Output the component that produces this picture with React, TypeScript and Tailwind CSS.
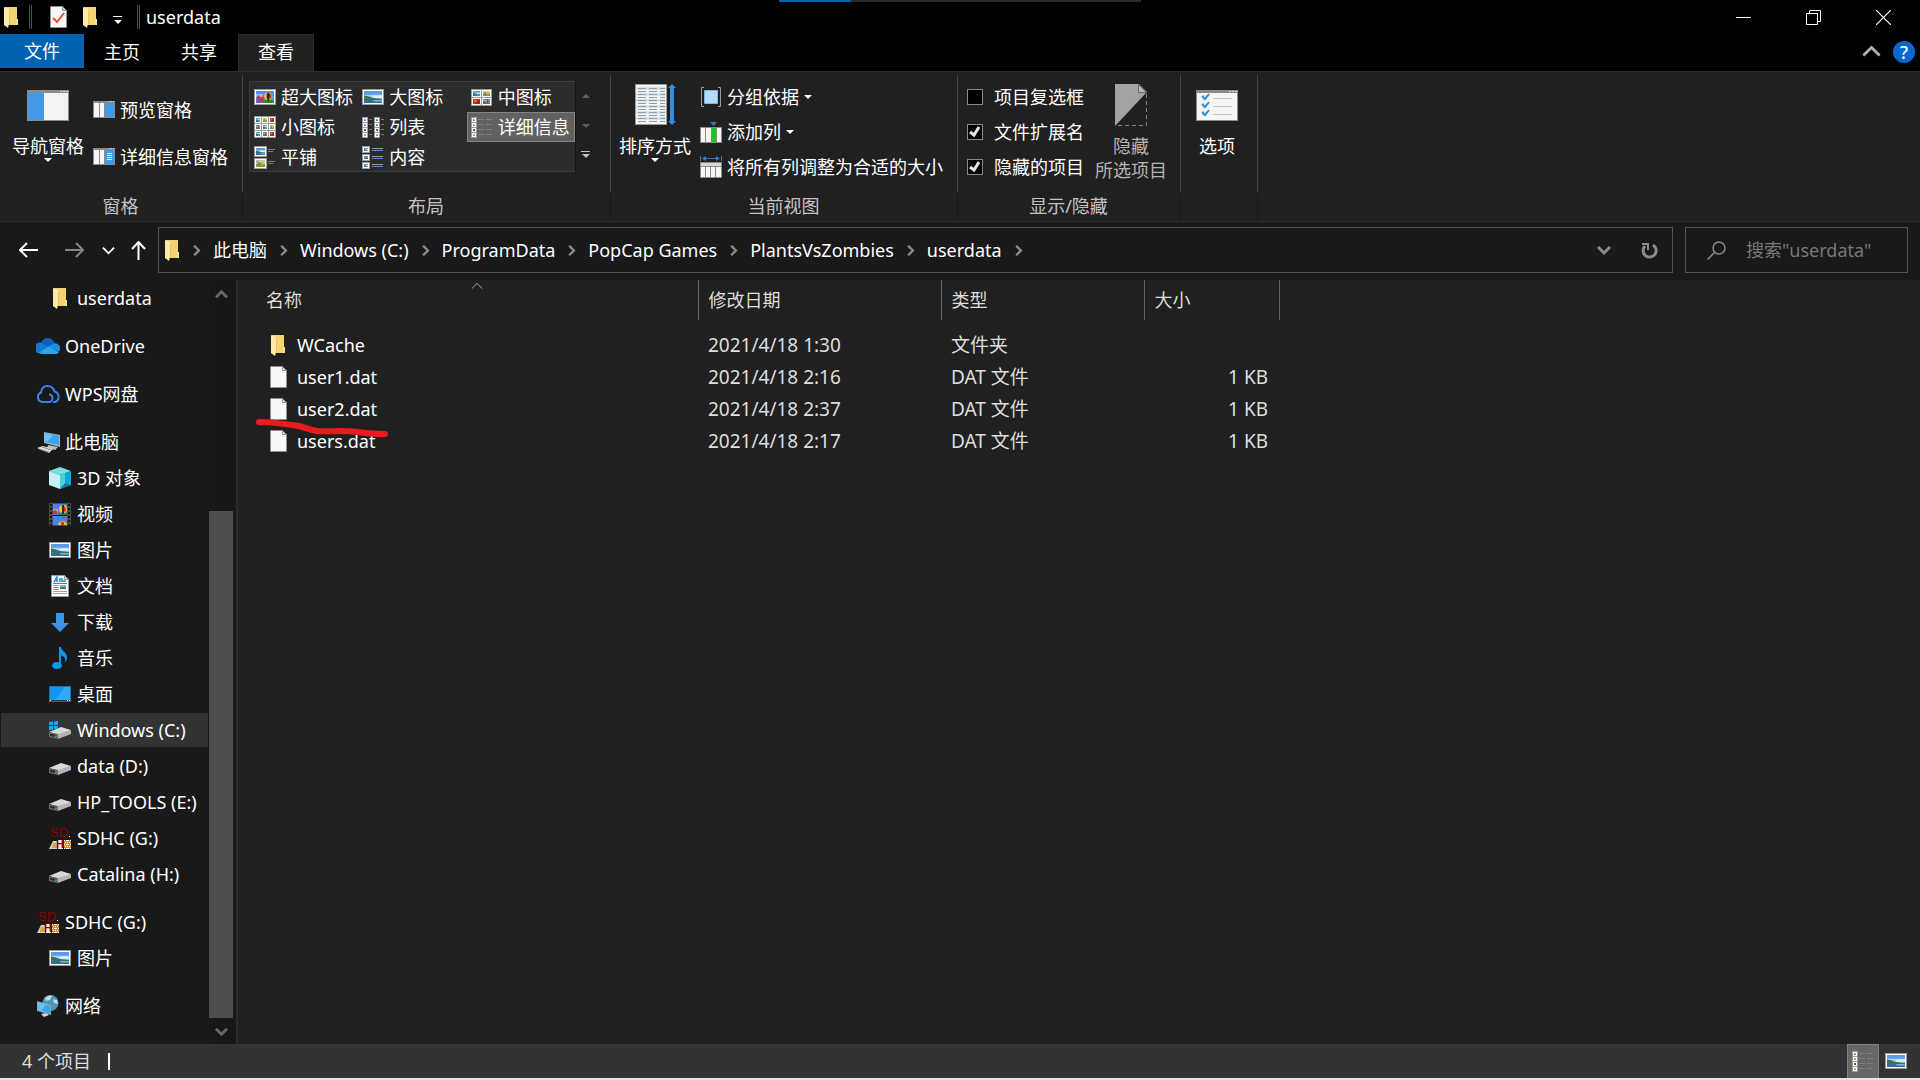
import { useState } from 'react';
import type { ReactNode } from 'react';

interface NavItem {
    icon: ReactNode;
    name: string;
    level: 1 | 2;
    selected?: boolean;
}

interface FileRow {
    name: string;
    date: string;
    type: string;
    size: string;
    folder?: boolean;
    marked?: boolean;
}

interface ThumbProps {
    x: number;
    y: number;
    w: number;
    h: number;
    kind: 'sea' | 'balloon' | 'flower' | 'red';
}

/* ---------- icons ---------- */

function Thumb({ x, y, w, h, kind }: ThumbProps) {
    return (
        <svg x={x} y={y} width={w} height={h} viewBox="0 0 22 16" preserveAspectRatio="none">
            {kind === 'sea' && (
                <>
                    <path fill="#5b9bea" d="M0 0h22v16H0z" />
                    <path fill="#a9d2f7" d="M0 5h22v5H0z" />
                    <path fill="#e2f1fb" d="M12 6h10v3H10z" />
                    <path fill="#3f6f55" d="M0 6l5 1 5 2 5 1 7 1v1H0z" />
                    <path fill="#2f6f9f" d="M0 12h22v4H0z" />
                    <path fill="#7fb3d4" d="M10 12h12v2H13z" />
                </>
            )}
            {kind === 'balloon' && (
                <>
                    <path fill="#4f8ff0" d="M0 0h22v16H0z" />
                    <path fill="#9cc6f6" d="M0 4h8v4H0z" />
                    <path fill="#2f8a3a" d="M8 12h14v4H8z" />
                    <path fill="#d8342c" d="M1 8l2-3 3 4 2-2 2 3-2 5H1z" />
                    <path fill="#7a4bc4" d="M1 12l3-2 3 4-2 2H1z" />
                    <ellipse cx="15" cy="7" rx="5" ry="5" fill="#f5c518" />
                    <ellipse cx="15" cy="7" rx="2" ry="5" fill="#3a2d12" />
                    <path fill="#d8342c" d="M17 3l2 2v4l-2 2z" />
                    <path fill="#3a2d12" d="M14 12h2v2h-2z" />
                </>
            )}
            {kind === 'flower' && (
                <>
                    <path fill="#b9d5a2" d="M0 0h22v16H0z" />
                    <path fill="#6ea33f" d="M0 9h22v7H0z" />
                    <circle cx="8" cy="9" r="4" fill="#e0572f" />
                    <circle cx="15" cy="7" r="4" fill="#e9b23a" />
                    <path fill="#7a8fd6" d="M1 2h5v4H1z" />
                </>
            )}
            {kind === 'red' && (
                <>
                    <path fill="#c4301f" d="M0 0h22v16H0z" />
                    <path fill="#e8842a" d="M4 3h8v6H4z" />
                    <path fill="#7d1c12" d="M13 8h7v6h-7z" />
                </>
            )}
        </svg>
    );
}

function Tile({ x, y, w, h, kind }: ThumbProps) {
    return (
        <>
            <rect x={x} y={y} width={w} height={h} fill="#9d9d9d" />
            <rect x={x + 1} y={y + 1} width={w - 2} height={h - 2} fill="#fff" />
            <Thumb x={x + 2} y={y + 2} w={w - 4} h={h - 4} kind={kind} />
        </>
    );
}

function FolderIcon() {
    return (
        <svg width="15" height="21" viewBox="0 0 15 21" className="shrink-0">
            <path fill="#f5d473" d="M1 0h12v12h1v6H3z" />
            <path fill="#fbe08c" d="M12 12h2v6h-2z" />
            <path fill="#ffeaa9" d="M0 0l5 2v15l-1 4-4-3z" />
            <path fill="#e9c45f" d="M5 4h1v14H5z" />
        </svg>
    );
}

function FileIcon({ check }: { check?: boolean }) {
    return (
        <svg width="17" height="22" viewBox="0 0 17 22" className="shrink-0">
            <path fill="#f6f8f9" stroke="#8f8f8f" d="M.5.5h12l4 4v17H.5z" />
            <path fill="#dcdcdc" stroke="#8f8f8f" d="M12.5.5v4h4z" />
            {check && <path fill="none" stroke="#e8541e" strokeWidth="2" d="M3 12l4 4 7-9" />}
        </svg>
    );
}

function PictureIcon() {
    return (
        <svg width="22" height="16" viewBox="0 0 22 16" className="shrink-0">
            <Tile x={0} y={0} w={22} h={16} kind="sea" />
        </svg>
    );
}

function OneDriveIcon() {
    return (
        <svg width="24" height="16" viewBox="0 0 24 16" className="shrink-0">
            <path fill="#0a64b8" d="M5 5a7 7 0 0 1 13-1l1 3-7 3z" />
            <path fill="#0f78d4" d="M5 4.5l8 5-10 6A5.500 5.500 0 0 1 5 4.5z" />
            <path fill="#1890e0" d="M12 8.500l6-3a5 5 0 0 1 5 8z" />
            <path fill="#29a7ea" d="M3 14.500l10-6 10 5.500c-1 1.500-2 2-4 2H6c-1 0-2-.5-3-1.500z" />
        </svg>
    );
}

function WpsIcon() {
    return (
        <svg width="24" height="18" viewBox="0 0 24 18" fill="none" stroke="#3f7ee8" strokeWidth="2" className="shrink-0">
            <path d="M14 17H6a5 5 0 0 1-1-9.500C5 3.500 8 1 11.500 1S18 3.500 18.500 6.500A5.500 5.500 0 0 1 19 17h-2" />
            <path d="M13 9.500c2 0 3.500 1.500 3.500 3.500S15 17 13 17" />
        </svg>
    );
}

function PcIcon() {
    return (
        <svg width="24" height="21" viewBox="0 0 24 21" className="shrink-0">
            <path fill="#9fb4c4" d="M8 0l16 3v12L8 11z" />
            <path fill="#37a6f2" d="M9 1l14 3v9L9 10z" />
            <path fill="#6cc3f9" d="M9 1l8 2-6 7-2-1z" />
            <path fill="#b9bec2" d="M12 13l10 2-3 3-8-2z" />
            <path fill="#dfe3e6" d="M1 16l6-2 10 3-4 4z" />
            <path stroke="#8a9196" d="M3 17l10 3M6 15l9 3" />
        </svg>
    );
}

function CubeIcon() {
    return (
        <svg width="22" height="22" viewBox="0 0 22 22" className="shrink-0">
            <path fill="#7adfe8" d="M11 0l11 4-11 4L0 4z" />
            <path fill="#c5f1f4" d="M0 4l11 4v14L0 18z" />
            <path fill="#12a7dc" d="M22 4L11 8v14l11-4z" />
            <path fill="#0a7fa8" d="M22 18l-6-2-5 6z" />
            <path fill="#4fd0dd" d="M11 8l5-2v10l-5 6z" />
        </svg>
    );
}

function VideoIcon() {
    return (
        <svg width="22" height="23" viewBox="0 0 22 23" className="shrink-0">
            <path fill="#4a4a4a" d="M0 0h22v23H0z" />
            <path fill="#4a83e6" d="M4 1h14v21H4z" />
            <path fill="#c98fc0" d="M4 6h5v4H4z" />
            <path fill="#d8342c" d="M4 8l3-1 2 4H4z" />
            <path fill="#2f8a3a" d="M9 10h9v2H9z" />
            <path fill="#111" d="M4 12h14v1H4z" />
            <ellipse cx="14" cy="6" rx="4" ry="4" fill="#f5c518" />
            <path fill="#3a2d12" d="M13 2h2v9h-2z" />
            <path fill="#d8342c" d="M15 3l2 2v3l-2 1zM12 14h5l-2 2z" />
            <path fill="#f5c518" d="M9 22c0-5 9-5 9 0z" />
            <path fill="#d8342c" d="M12 19h3v3h-3z" />
            <path stroke="#161616" strokeWidth="2" strokeDasharray="2 2" d="M2 1v22M20 1v22" />
        </svg>
    );
}

function DocIcon() {
    return (
        <svg width="18" height="22" viewBox="0 0 18 22" className="shrink-0">
            <path fill="#fff" stroke="#9a9a9a" d="M.5.5h13l4 4v17H.5z" />
            <path fill="#ddd" stroke="#9a9a9a" d="M13.5.5v4h4z" />
            <path stroke="#2a8fd6" strokeWidth="1.500" fill="none" d="M3 7l3-5v5M4 5h2M8 4h4M8 6h7" />
            <path stroke="#2a8fd6" strokeWidth="1" d="M2 8.500h14" />
            <path stroke="#9f9f9f" d="M2 10.500h6M2 12.500h6M2 14.500h6M2 16.500h14M2 18.500h14" />
            <path fill="#7fb3df" d="M9 10h6v4H9z" />
            <path fill="#3f7f52" d="M9 12h6v2H9z" />
        </svg>
    );
}

function DownloadIcon() {
    return (
        <svg width="18" height="19" viewBox="0 0 18 19" className="shrink-0">
            <path fill="#3b94e4" d="M5 0h8v10h5l-9 9-9-9h5z" />
        </svg>
    );
}

function MusicIcon() {
    return (
        <svg width="18" height="22" viewBox="0 0 18 22" className="shrink-0">
            <ellipse cx="6" cy="18.500" rx="5" ry="3.500" fill="#1096f0" />
            <path fill="#1096f0" d="M8 0h2c0 4 6 5 6 10 0 2-.5 4-2 5.500 1-4-.5-6-4-7V18H8z" />
        </svg>
    );
}

function DesktopIcon() {
    return (
        <svg width="22" height="16" viewBox="0 0 22 16" className="shrink-0">
            <path fill="#0c72b9" d="M0 0h22v16H0z" />
            <path fill="#1295f4" d="M1 1h20v13H1z" />
            <path fill="#33a9fb" d="M16 1h5v13H6z" />
            <path fill="#0b3f68" d="M1 14h20v1H1z" />
            <path fill="#fff" d="M1 14h1v1H1zM18 14h1v1h-1zM20 14h1v1h-1z" />
        </svg>
    );
}

function DriveIcon({ windows }: { windows?: boolean }) {
    return (
        <svg width="22" height="18" viewBox="0 0 22 18" className="shrink-0">
            <path fill="#d9d9d9" d="M0 11l12-5 10 3-11 5z" />
            <path fill="#6f6f6f" d="M0 11l9 2v5l-9-2z" />
            <path fill="#b4b4b4" d="M9 13l13-4v4L9 18z" />
            <path fill="#2e2e2e" d="M1 12.500l7 1.500v2.500L1 15z" />
            <path fill="#37c24a" d="M6 14.500h2v1.500H6z" />
            {windows && <path fill="#00b3f0" d="M0 1l4-.5V4H0zM4.800.4L9 0v4H4.800zM0 5h4v4H0zM4.800 5H9v3H4.800z" />}
        </svg>
    );
}

function SdIcon() {
    return (
        <svg width="22" height="24" viewBox="0 0 22 24" className="shrink-0 overflow-visible" fontFamily="Liberation Sans, sans-serif">
            <text x="1" y="11" fontSize="13" fill="#8b0000">SD</text>
            <path fill="#fff" d="M20 10h1v1h-1z" />
            <path fill="#d8d2bd" d="M0 23l4-8h4v8z" />
            <path fill="#f6f2df" d="M9 14h5v9H9z" />
            <path fill="#c9a44c" d="M4 17h3v5H3z" />
            <text x="7" y="22" fontSize="11" fontWeight="700" fill="#8b0000">H</text>
            <path fill="#f58220" d="M15 14h7v9h-7z" />
            <path stroke="#fff" strokeDasharray="1 1" d="M15 14.500h7M16 16.500h6M15 18.500h7M16 20.500h6M15 22.500h7M18.500 14v9" />
        </svg>
    );
}

function NetworkIcon() {
    return (
        <svg width="22" height="22" viewBox="0 0 22 22" className="shrink-0">
            <circle cx="13.500" cy="8" r="8" fill="#4f93b4" />
            <path fill="#b9dcea" d="M8 3c2-2 5-3 7-2l-2 4-4 1zM16 4l4 1 1 4-4-1z" />
            <path fill="#d5d5d5" d="M4 19l5-1 3 2-5 2z" />
            <path fill="#8fa6b4" d="M0 6l14 4v10L0 16z" />
            <path fill="#35a7f4" d="M1 7.500l12 3.500v7.500L1 15z" />
            <path fill="#66c1fa" d="M1 7.500l8 2L4 16l-3-1z" />
        </svg>
    );
}

function PaneIcon({ kind }: { kind: 'nav' | 'preview' | 'details' }) {
    if (kind === 'nav') {
        return (
            <svg width="42" height="31" viewBox="0 0 42 31">
                <path fill="#8b8b8d" d="M0 0h42v31H0z" />
                <path fill="#f3f3f4" d="M18 3h23v27H18z" />
                <path fill="#3f9be6" d="M1 3h16v27H1z" />
                <path fill="#fff" d="M17 3h1v27h-1z" />
                <path fill="#d4d4d4" d="M33 1h2v1h-2zM36 1h2v1h-2zM39 1h2v1h-2z" />
            </svg>
        );
    }
    return (
        <svg width="22" height="17" viewBox="0 0 22 17" className="shrink-0">
            <path fill="#8b8b8d" d="M0 0h22v17H0z" />
            <path fill="#f6f6f6" d="M1 2h5v14H1zM7 2h4v14H7z" />
            <path fill="#3f9be6" d="M12 2h9v14h-9z" />
            <path fill="#d4d4d4" d="M16 0h1v1h-1zM18 0h1v1h-1zM20 0h1v1h-1z" />
            {kind === 'details' && <path stroke="#d7ecfb" d="M14 5.500h5M14 7.500h5M14 9.500h5M14 11.500h5" />}
        </svg>
    );
}

function XlIcon() {
    return (
        <svg width="22" height="16" viewBox="0 0 22 16">
            <Tile x={0} y={0} w={22} h={16} kind="balloon" />
        </svg>
    );
}

function MediumIcon() {
    return (
        <svg width="21" height="17" viewBox="0 0 21 17">
            <Tile x={0} y={0} w={11} h={9} kind="sea" />
            <Tile x={10} y={0} w={11} h={9} kind="flower" />
            <Tile x={0} y={8} w={11} h={9} kind="red" />
            <Tile x={10} y={8} w={11} h={9} kind="balloon" />
        </svg>
    );
}

function SmallIcon() {
    const kinds = ['sea', 'flower', 'red', 'balloon', 'sea', 'flower', 'sea', 'balloon', 'red'] as const;
    return (
        <svg width="22" height="22" viewBox="0 0 22 22">
            {kinds.map((kind, i) => (
                <Tile key={i} x={(i % 3) * 7} y={Math.floor(i / 3) * 7} w={8} h={8} kind={kind} />
            ))}
        </svg>
    );
}

function ListIcon() {
    return (
        <svg width="22" height="21" viewBox="0 0 22 21">
            {[0, 12].map((x) => [0, 5, 10, 15].map((y, i) => (
                <Tile key={`${x}-${y}`} x={x} y={y} w={6} h={6} kind={(['sea', 'sea', 'red', 'flower'] as const)[i]} />
            )))}
            <path stroke="#7c7c7c" d="M7 2.500h3M7 7.500h3M7 12.500h3M7 17.500h3M19 2.500h3M19 7.500h3M19 12.500h3M19 17.500h3" />
        </svg>
    );
}

function DetailsIcon() {
    return (
        <svg width="22" height="21" viewBox="0 0 22 21">
            {[0, 5, 10, 15].map((y, i) => (
                <Tile key={y} x={0} y={y} w={6} h={6} kind={(['sea', 'flower', 'red', 'flower'] as const)[i]} />
            ))}
            <path stroke="#7f7f7f" d="M7 2.500h6M15 2.500h6M7 7.500h6M15 7.500h6M7 12.500h6M15 12.500h6M7 17.500h6M15 17.500h6" />
        </svg>
    );
}

function TilesIcon() {
    return (
        <svg width="22" height="23" viewBox="0 0 22 23">
            <Tile x={0} y={0} w={13} h={11} kind="sea" />
            <Tile x={0} y={12} w={13} h={11} kind="flower" />
            <path stroke="#7c7c7c" d="M14 3.500h7M14 5.500h5M14 15.500h7M14 17.500h5" />
        </svg>
    );
}

function ContentIcon() {
    return (
        <svg width="22" height="23" viewBox="0 0 22 23">
            <Tile x={0} y={0} w={8} h={7} kind="sea" />
            <Tile x={0} y={8} w={8} h={7} kind="balloon" />
            <Tile x={0} y={16} w={8} h={7} kind="sea" />
            <path stroke="#9a9a9a" d="M10 2.500h11M10 10.500h11M10 18.500h11" />
            <path stroke="#4a8fe8" d="M10 4.500h11M10 12.500h11M10 20.500h11" />
        </svg>
    );
}

function SortIcon() {
    return (
        <svg width="41" height="42" viewBox="0 0 41 42">
            <path fill="#f5f5f5" stroke="#9c9c9c" d="M.5.5h31v40H.5z" />
            <path fill="#cfe8f4" d="M1 3h30v3H1zM1 9h30v3H1zM1 15h30v3H1zM1 21h30v3H1zM1 27h30v3H1zM1 33h30v3H1z" />
            <path stroke="#9a9a9a" strokeDasharray="8 3" d="M3 4.500h27M3 7.500h27M3 10.500h27M3 13.500h27M3 16.500h27M3 19.500h27M3 22.500h27M3 25.500h27M3 28.500h27M3 31.500h27M3 34.500h27M3 37.500h27" />
            <path fill="#2f8fe0" d="M37 0l4 4h-2v33h2l-4 4-4-4h2V4h-2z" />
        </svg>
    );
}

function GroupByIcon() {
    return (
        <svg width="22" height="20" viewBox="0 0 22 20">
            <path fill="none" stroke="#9a9a9a" d="M4 .5H1.500v19H4M18 .5h2.500v19H18" />
            <path fill="#b7dcfb" stroke="#7db7ea" d="M4.500 3.500h13v13h-13z" />
        </svg>
    );
}

function AddColumnIcon() {
    return (
        <svg width="22" height="22" viewBox="0 0 22 22">
            <path fill="#2f7fc8" d="M10 1h7l-3.500 4z" />
            <path fill="#8a8a8a" d="M0 6h22v16H0z" />
            <path fill="#f6f6f6" d="M1 7h4v14H1zM6 7h5v14H6zM17 7h4v14h-4z" />
            <path fill="#22c322" d="M11 7h5v14h-5z" />
        </svg>
    );
}

function FitColumnsIcon() {
    return (
        <svg width="22" height="22" viewBox="0 0 22 22">
            <path stroke="#2f7fc8" d="M.5 0v5M21.500 0v5M3 2.500h16" />
            <path fill="#2f7fc8" d="M2 2.500L6 0v5zM20 2.500L16 0v5z" />
            <path fill="#8a8a8a" d="M0 6h22v16H0z" />
            <path fill="#d8d8d8" d="M1 7h20v3H1z" />
            <path fill="#f6f6f6" d="M1 11h4v10H1zM6 11h4v10H6zM11 11h4v10h-4zM16 11h5v10h-5z" />
        </svg>
    );
}

function HideIcon() {
    return (
        <svg width="32" height="42" viewBox="0 0 32 42">
            <path fill="#a3a3a3" d="M0 0h24l8 8L0 42z" />
            <path fill="#b9b9b9" stroke="#666" d="M23.500.5v8h8z" />
            <path fill="none" stroke="#808080" strokeDasharray="4 3" d="M31.500 10v31.500H1" />
        </svg>
    );
}

function OptionsIcon() {
    return (
        <svg width="42" height="31" viewBox="0 0 42 31">
            <path fill="#8b8b8d" d="M0 0h42v31H0z" />
            <path fill="#f5f5f6" d="M1 3h40v27H1z" />
            <path fill="#d4d4d4" d="M33 1h2v1h-2zM36 1h2v1h-2zM39 1h2v1h-2z" />
            <path fill="#dedede" d="M6 5h5v5H6zM6 13h5v5H6zM6 21h5v5H6z" />
            <path fill="none" stroke="#2f8fe0" strokeWidth="2" d="M6 6l3 3 4-5M6 14l3 3 4-5M6 22l3 3 4-5" />
            <path stroke="#c4c4c4" d="M17 8.500h19M17 16.500h19M17 24.500h19" />
        </svg>
    );
}

function Caret({ className = 'text-white' }: { className?: string }) {
    return (
        <svg width="8" height="4" viewBox="0 0 8 4" className={className}>
            <path fill="currentColor" d="M0 0h8L4 4z" />
        </svg>
    );
}

function Chevron({ size = 14, width = 2, turn = '', className = '' }: { size?: number; width?: number; turn?: string; className?: string }) {
    return (
        <svg width={size} height={size} viewBox="0 0 14 14" fill="none" stroke="currentColor" strokeWidth={width} className={`${turn} ${className}`}>
            <path d="M1 4l6 6 6-6" />
        </svg>
    );
}

/* ---------- ribbon ---------- */

function RibbonGroup({ label, className = '', children }: { label?: string; className?: string; children: ReactNode }) {
    return (
        <section className={`relative flex flex-col ${className}`}>
            <div className="flex h-[120px] items-start">{children}</div>
            <h2 className="h-7 pr-[2px] text-center leading-7 text-[#c3c3c3]">{label}</h2>
            <div className="absolute top-[3px] right-0 h-[117px] w-px bg-[#444]" />
            <div className="absolute right-0 bottom-0 h-7 w-px bg-[#181818]" />
        </section>
    );
}

function BigButton({ icon, label, caret, disabled }: { icon: ReactNode; label: ReactNode; caret?: boolean; disabled?: boolean }) {
    return (
        <button type="button" disabled={disabled} className="flex flex-col items-center leading-6 text-white disabled:text-[#b4b4b4]">
            <span className="mb-1 flex h-[50px] items-center">{icon}</span>
            {label}
            {caret && <Caret />}
        </button>
    );
}

function SmallButton({ icon, label, caret }: { icon: ReactNode; label: string; caret?: boolean }) {
    return (
        <button type="button" className="flex h-[35px] items-center whitespace-nowrap text-white">
            <span className="mr-[5px] flex w-[22px] justify-center">{icon}</span>
            {label}
            {caret && <span className="ml-[5px]"><Caret /></span>}
        </button>
    );
}

function CheckOption({ label, checked, onChange }: { label: string; checked: boolean; onChange: () => void }) {
    return (
        <label className="flex h-[35px] items-center whitespace-nowrap text-white">
            <span className="relative mr-[11px] size-4">
                <input
                    type="checkbox"
                    checked={checked}
                    onChange={onChange}
                    className="block size-4 appearance-none border border-[#8a8a8a] bg-black"
                />
                {checked && (
                    <svg width="16" height="16" viewBox="0 0 16 16" className="pointer-events-none absolute inset-0">
                        <path fill="none" stroke="#e6e6e6" strokeWidth="3" d="M3 8l4 3 5-8" />
                    </svg>
                )}
            </span>
            {label}
        </label>
    );
}

const views = [
    { name: '超大图标', icon: <XlIcon /> },
    { name: '大图标', icon: <PictureIcon /> },
    { name: '中图标', icon: <MediumIcon /> },
    { name: '小图标', icon: <SmallIcon /> },
    { name: '列表', icon: <ListIcon /> },
    { name: '详细信息', icon: <DetailsIcon /> },
    { name: '平铺', icon: <TilesIcon /> },
    { name: '内容', icon: <ContentIcon /> },
];

function Ribbon() {
    const [view, setView] = useState('详细信息');
    const [options, setOptions] = useState([
        { name: '项目复选框', checked: false },
        { name: '文件扩展名', checked: true },
        { name: '隐藏的项目', checked: true },
    ]);

    const toggle = (name: string) => {
        setOptions(options.map((o) => (o.name === name ? { ...o, checked: !o.checked } : o)));
    };

    return (
        <div className="flex h-[151px] shrink-0 border-y border-[#2d2d2d] bg-[#202020]">
            <RibbonGroup label="窗格" className="w-[243px]">
                <div className="pt-2 pl-3">
                    <BigButton icon={<PaneIcon kind="nav" />} label="导航窗格" caret />
                </div>
                <div className="flex flex-col gap-3 pt-5 pl-[9px]">
                    <SmallButton icon={<PaneIcon kind="preview" />} label="预览窗格" />
                    <SmallButton icon={<PaneIcon kind="details" />} label="详细信息窗格" />
                </div>
            </RibbonGroup>

            <RibbonGroup label="布局" className="w-[368px]">
                <div className="mt-[9px] ml-[6px] grid h-[91px] w-[326px] grid-cols-3 border border-r-0 border-[#3d3d3d] bg-[#2b2b2b]">
                    {views.map((v) => (
                        <button
                            key={v.name}
                            type="button"
                            onClick={() => setView(v.name)}
                            className={`flex h-[30px] items-center border pl-[3px] whitespace-nowrap text-white ${
                                v.name === view ? 'border-[#838383] bg-[#616161]' : 'border-transparent'
                            }`}
                        >
                            <span className="mr-[5px] flex w-[22px]">{v.icon}</span>
                            {v.name}
                        </button>
                    ))}
                </div>
                <div className="mt-[9px] flex h-[91px] w-5 flex-col border-l border-[#151515]">
                    <button type="button" aria-label="上一行" className="flex h-[30px] items-center justify-center"><Caret className="rotate-180 text-[#606060]" /></button>
                    <button type="button" aria-label="下一行" className="flex h-[30px] items-center justify-center"><Caret className="text-[#606060]" /></button>
                    <button type="button" aria-label="其他" className="flex h-[26px] flex-col items-center justify-center gap-[2px]">
                        <span className="h-px w-[9px] bg-[#c0c0c0]" />
                        <Caret className="text-[#c0c0c0]" />
                    </button>
                </div>
            </RibbonGroup>

            <RibbonGroup label="当前视图" className="w-[347px]">
                <div className="pt-2 pl-2">
                    <BigButton icon={<SortIcon />} label="排序方式" caret />
                </div>
                <div className="flex flex-col pt-[7px] pl-[9px]">
                    <SmallButton icon={<GroupByIcon />} label="分组依据" caret />
                    <SmallButton icon={<AddColumnIcon />} label="添加列" caret />
                    <SmallButton icon={<FitColumnsIcon />} label="将所有列调整为合适的大小" />
                </div>
            </RibbonGroup>

            <RibbonGroup label="显示/隐藏" className="w-[223px]">
                <div className="flex flex-col pt-[7px] pl-[9px]">
                    {options.map((o) => (
                        <CheckOption key={o.name} label={o.name} checked={o.checked} onChange={() => toggle(o.name)} />
                    ))}
                </div>
                <div className="pt-2 pl-[11px]">
                    <BigButton icon={<HideIcon />} label={<>隐藏<br />所选项目</>} disabled />
                </div>
            </RibbonGroup>

            <RibbonGroup className="w-[77px]">
                <div className="pt-2 pl-[15px]">
                    <BigButton icon={<OptionsIcon />} label="选项" />
                </div>
            </RibbonGroup>
        </div>
    );
}

/* ---------- window parts ---------- */

function TitleBar() {
    return (
        <header className="relative flex h-[34px] shrink-0 items-center bg-black pl-1">
            <div className="absolute top-0 left-[779px] flex h-[2px] w-[362px] bg-[#2b2b2b]">
                <div className="w-[72px] bg-[#0063b1]" />
            </div>
            <FolderIcon />
            <span className="ml-[10px] h-6 w-[3px] border-x border-[#4a4a4a]" />
            <button type="button" aria-label="属性" className="ml-[18px]"><FileIcon check /></button>
            <button type="button" aria-label="新建文件夹" className="ml-4"><FolderIcon /></button>
            <button type="button" aria-label="自定义快速访问工具栏" className="ml-[15px] flex flex-col items-center gap-[3px] pt-[5px]">
                <span className="h-px w-[9px] bg-white" />
                <Caret />
            </button>
            <span className="ml-[15px] h-6 w-[3px] border-x border-[#4a4a4a]" />
            <h1 className="ml-[6px] text-white">userdata</h1>
            <div className="ml-auto flex self-stretch pr-[2px] text-white">
                <button type="button" aria-label="最小化" className="flex w-[70px] items-center justify-center">
                    <span className="h-px w-[15px] bg-white" />
                </button>
                <button type="button" aria-label="还原" className="flex w-[70px] items-center justify-center">
                    <svg width="15" height="15" viewBox="0 0 15 15" fill="none" stroke="currentColor">
                        <path d="M.5 3.500h11v11H.5zM3.500 3V.5h11v11H12" />
                    </svg>
                </button>
                <button type="button" aria-label="关闭" className="flex w-[70px] items-center justify-center">
                    <svg width="15" height="15" viewBox="0 0 15 15" stroke="currentColor" strokeWidth="1.200">
                        <path d="M0 0l15 15M15 0L0 15" />
                    </svg>
                </button>
            </div>
        </header>
    );
}

function TabBar() {
    return (
        <nav className="flex h-[37px] shrink-0 bg-black text-white">
            <button type="button" className="h-[34px] w-[84px] bg-[#0063b1]">文件</button>
            <button type="button" className="w-[76px] pb-px">主页</button>
            <button type="button" className="w-[78px] pb-px">共享</button>
            <button type="button" className="-mb-px w-[76px] border border-b-0 border-[#2d2d2d] bg-[#202020] pb-[3px]">查看</button>
            <div className="ml-auto flex items-center gap-3 pr-[5px] pb-[2px]">
                <button type="button" aria-label="最小化功能区" className="text-[#b0b0b0]"><Chevron size={19} turn="rotate-180" width={2} /></button>
                <button type="button" aria-label="帮助" className="size-[22px] rounded-full bg-[#0369cf] leading-[22px] font-medium">?</button>
            </div>
        </nav>
    );
}

const crumbs = ['此电脑', 'Windows (C:)', 'ProgramData', 'PopCap Games', 'PlantsVsZombies', 'userdata'];

function AddressBar() {
    const [query, setQuery] = useState('');

    return (
        <div className="flex h-[58px] shrink-0 items-start bg-[#191919] pt-[5px] pr-3">
            <div className="flex h-[46px] w-[158px] shrink-0 items-center pl-[19px] text-white">
                <button type="button" aria-label="后退">
                    <svg width="19" height="16" viewBox="0 0 19 16" fill="none" stroke="currentColor" strokeWidth="2"><path d="M19 8H1M8 1L1 8l7 7" /></svg>
                </button>
                <button type="button" aria-label="前进" disabled className="ml-[27px] text-[#868686]">
                    <svg width="19" height="16" viewBox="0 0 19 16" fill="none" stroke="currentColor" strokeWidth="2"><path d="M0 8h18M11 1l7 7-7 7" /></svg>
                </button>
                <button type="button" aria-label="最近浏览的位置" className="ml-[18px]"><Chevron size={13} /></button>
                <button type="button" aria-label="上移" className="ml-4">
                    <svg width="15" height="19" viewBox="0 0 15 19" fill="none" stroke="currentColor" strokeWidth="2"><path d="M7.500 19V1M1 8l6.500-7L14 8" /></svg>
                </button>
            </div>
            <div className="flex h-[46px] min-w-0 flex-1 items-center border border-[#535353] pl-[6px]">
                <FolderIcon />
                <span className="flex w-[33px] justify-center text-[#8c8c8c]"><Chevron size={11} turn="-rotate-90" width={3} /></span>
                {crumbs.map((c) => (
                    <div key={c} className="flex items-center">
                        <button type="button" className="whitespace-nowrap text-white">{c}</button>
                        <span className="flex w-[33px] justify-center text-[#8c8c8c]"><Chevron size={11} turn="-rotate-90" width={3} /></span>
                    </div>
                ))}
                <button type="button" aria-label="以前的位置" className="ml-auto flex h-full w-[45px] items-center justify-center text-[#8c8c8c]"><Chevron width={3} /></button>
                <button type="button" aria-label="刷新" className="flex h-full w-[46px] items-center justify-center border-l border-[#151515] text-[#8c8c8c]">
                    <svg width="17" height="17" viewBox="0 0 17 17" fill="none" stroke="currentColor" strokeWidth="3">
                        <path d="M12 3A6.500 6.500 0 1 1 4 4" />
                        <path strokeWidth="2" d="M1 2h6v6" />
                    </svg>
                </button>
            </div>
            <label className="ml-3 flex h-[46px] w-[223px] shrink-0 items-center border border-[#535353] pl-[21px] text-[#8c8c8c]">
                <svg width="19" height="19" viewBox="0 0 19 19" fill="none" stroke="currentColor" strokeWidth="1.500" className="shrink-0">
                    <circle cx="12" cy="7" r="6" />
                    <path d="M8 11L.5 18.500" />
                </svg>
                <input
                    type="search"
                    aria-label="搜索"
                    value={query}
                    onChange={(e) => setQuery(e.target.value)}
                    placeholder={'搜索"userdata"'}
                    className="ml-5 w-full min-w-0 bg-transparent outline-none placeholder:text-[#777]"
                />
            </label>
        </div>
    );
}

const navGroups: NavItem[][] = [
    [{ icon: <FolderIcon />, name: 'userdata', level: 2 }],
    [{ icon: <OneDriveIcon />, name: 'OneDrive', level: 1 }],
    [{ icon: <WpsIcon />, name: 'WPS网盘', level: 1 }],
    [
        { icon: <PcIcon />, name: '此电脑', level: 1 },
        { icon: <CubeIcon />, name: '3D 对象', level: 2 },
        { icon: <VideoIcon />, name: '视频', level: 2 },
        { icon: <PictureIcon />, name: '图片', level: 2 },
        { icon: <DocIcon />, name: '文档', level: 2 },
        { icon: <DownloadIcon />, name: '下载', level: 2 },
        { icon: <MusicIcon />, name: '音乐', level: 2 },
        { icon: <DesktopIcon />, name: '桌面', level: 2 },
        { icon: <DriveIcon windows />, name: 'Windows (C:)', level: 2, selected: true },
        { icon: <DriveIcon />, name: 'data (D:)', level: 2 },
        { icon: <DriveIcon />, name: 'HP_TOOLS (E:)', level: 2 },
        { icon: <SdIcon />, name: 'SDHC (G:)', level: 2 },
        { icon: <DriveIcon />, name: 'Catalina (H:)', level: 2 },
    ],
    [
        { icon: <SdIcon />, name: 'SDHC (G:)', level: 1 },
        { icon: <PictureIcon />, name: '图片', level: 2 },
    ],
    [{ icon: <NetworkIcon />, name: '网络', level: 1 }],
];

function Sidebar() {
    return (
        <aside className="flex w-[238px] shrink-0 border-r-2 border-[#2b2b2b] bg-[#191919]">
            <div className="flex min-w-0 flex-1 flex-col gap-3 overflow-hidden">
                {navGroups.map((group, i) => (
                    <ul key={i}>
                        {group.map((item) => (
                            <li key={item.name} className="h-9 px-px py-px">
                                <button
                                    type="button"
                                    className={`flex h-[34px] w-full items-center whitespace-nowrap text-white ${item.level === 1 ? 'pl-[35px]' : 'pl-[47px]'} ${
                                        item.selected ? 'bg-[#333]' : ''
                                    }`}
                                >
                                    <span className="mr-[5px] flex w-6 justify-center">{item.icon}</span>
                                    {item.name}
                                </button>
                            </li>
                        ))}
                    </ul>
                ))}
            </div>
            <div className="mr-[3px] flex w-6 flex-col bg-[#171717] text-[#686868]">
                <button type="button" aria-label="向上滚动" className="flex h-[28px] items-center justify-center"><Chevron size={13} turn="rotate-180" width={3} /></button>
                <div className="flex-[2]" />
                <div className="flex-[5] bg-[#4d4d4d]" />
                <button type="button" aria-label="向下滚动" className="flex h-[26px] items-center justify-center"><Chevron size={13} width={3} /></button>
            </div>
        </aside>
    );
}

const files: FileRow[] = [
    { name: 'WCache', date: '2021/4/18 1:30', type: '文件夹', size: '', folder: true },
    { name: 'user1.dat', date: '2021/4/18 2:16', type: 'DAT 文件', size: '1 KB' },
    { name: 'user2.dat', date: '2021/4/18 2:37', type: 'DAT 文件', size: '1 KB', marked: true },
    { name: 'users.dat', date: '2021/4/18 2:17', type: 'DAT 文件', size: '1 KB' },
];

function FileList() {
    return (
        <main className="min-w-0 flex-1 bg-[#202020]">
            <table className="w-[1041px] table-fixed border-collapse text-left text-[#dedede]">
                <thead>
                    <tr className="h-10 [&>th]:border-r [&>th]:border-[#636363] [&>th]:font-normal">
                        <th className="relative w-[460px] pl-7">
                            名称
                            <Chevron size={12} turn="rotate-180" width={1} className="absolute top-0 left-[233px] text-[#c0c0c0]" />
                        </th>
                        <th className="w-[243px] pl-[10px]">修改日期</th>
                        <th className="w-[203px] pl-[10px]">类型</th>
                        <th className="w-[135px] pl-[10px]">大小</th>
                    </tr>
                </thead>
                <tbody className="text-[19px]">
                    <tr aria-hidden="true"><td colSpan={4} className="h-[9px] p-0" /></tr>
                    {files.map((f) => (
                        <tr key={f.name} className="h-8">
                            <td className="relative p-0 pl-8 text-lg leading-6 text-white">
                                <div className="flex items-center">
                                    <span className="mr-[10px] flex w-[17px] justify-center">{f.folder ? <FolderIcon /> : <FileIcon />}</span>
                                    {f.name}
                                </div>
                                {f.marked && (
                                    <svg width="136" height="24" viewBox="0 0 136 24" className="absolute top-6 left-4 z-10">
                                        <path
                                            fill="none"
                                            stroke="#e81c1c"
                                            strokeWidth="6"
                                            strokeLinecap="round"
                                            d="M5 5c14 0 26 2 40 4 8 2 10 4 18 5 14 1 26-1 40 1 8 1 18 2 28 2"
                                        />
                                    </svg>
                                )}
                            </td>
                            <td className="p-0 pl-[10px]">{f.date}</td>
                            <td className="p-0 pl-[10px]">{f.type}</td>
                            <td className="p-0 pr-[11px] text-right">{f.size}</td>
                        </tr>
                    ))}
                </tbody>
            </table>
        </main>
    );
}

function StatusBar() {
    return (
        <footer className="flex h-9 shrink-0 items-stretch border-b-2 border-[#e5e5e5] bg-[#333] text-[#dedede]">
            <span className="self-center pl-[22px]">4 个项目</span>
            <span className="ml-[17px] h-[17px] w-[2px] self-center bg-white" />
            <button type="button" aria-label="详细信息视图" className="ml-auto flex w-8 items-center justify-center border border-b-0 border-[#838383] bg-[#666]">
                <DetailsIcon />
            </button>
            <button type="button" aria-label="缩略图视图" className="mr-2 ml-[1px] flex w-8 items-center justify-center"><PictureIcon /></button>
        </footer>
    );
}

export default function App() {
    return (
        <div className="flex h-screen flex-col overflow-hidden bg-[#191919] font-['Noto_Sans','Noto_Sans_CJK_SC',sans-serif] text-[18px] leading-6 select-none">
            <TitleBar />
            <TabBar />
            <Ribbon />
            <AddressBar />
            <div className="flex min-h-0 flex-1">
                <Sidebar />
                <FileList />
            </div>
            <StatusBar />
        </div>
    );
}
